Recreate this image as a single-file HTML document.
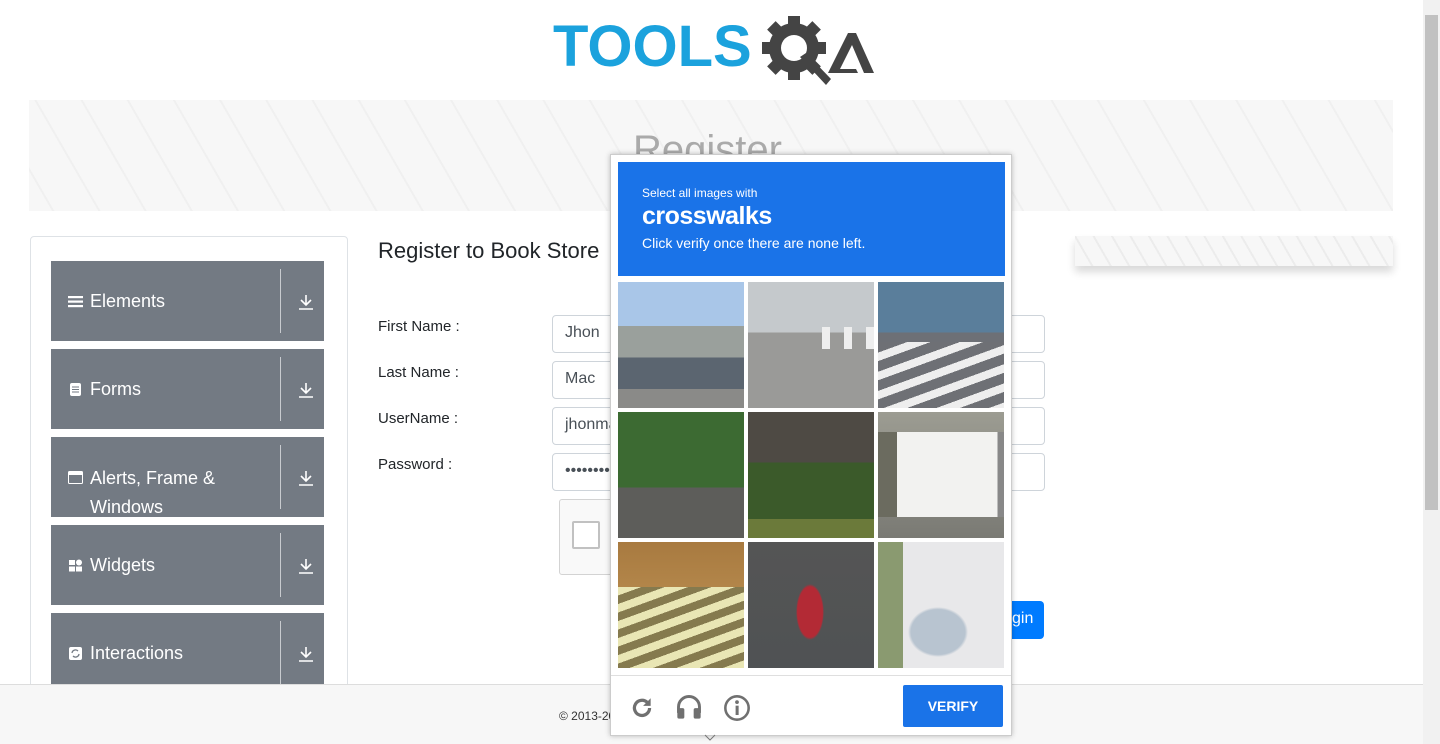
<!DOCTYPE html>
<html><head><meta charset="utf-8"><style>
*{box-sizing:border-box;margin:0;padding:0}
html,body{width:1440px;height:744px;overflow:hidden}
body{background:#fff;font-family:"Liberation Sans",sans-serif;position:relative;color:#212529}
.abs{position:absolute}
.banner{left:29px;top:100px;width:1364px;height:111px;background:
repeating-linear-gradient(60deg,#f7f7f7 0 20px,#efefef 20px 22px,#f7f7f7 22px 40px),#f5f5f5;opacity:.9}
.panel{left:30px;top:236px;width:318px;height:500px;border:1px solid #dee2e6;border-radius:4px}
.grp{left:51px;width:273px;height:80px;background:#737a83;color:#fff;font-size:18px}
.grp .t{position:absolute;left:39px;top:28px;line-height:24px}
.grp .ic{position:absolute;left:17px;top:34px;width:15px;height:13px}
.grp .sep{position:absolute;left:229px;top:8px;width:1px;height:64px;background:#c8cbcf}
.grp .dl{position:absolute;left:246px;top:32px;width:18px;height:18px}
.lbl{left:378px;font-size:15px;color:#212529}
.inp{left:552px;width:493px;height:38px;border:1px solid #ced4da;border-radius:4px;font-size:16px;color:#495057;padding:8px 12px}
.foot{left:0;top:684px;width:1423px;height:60px;background:#f7f7f7;border-top:1px solid #ddd;z-index:2}
.pop{left:610px;top:154px;width:402px;height:582px;background:#fff;border:1px solid #ccc;box-shadow:0 0 5px rgba(0,0,0,.25);z-index:5}
.hdr{left:7px;top:7px;width:387px;height:114px;background:#1a73e8;color:#fff;font-family:"Liberation Sans",sans-serif}
.img{width:126px;height:126px}
</style></head><body>
<!-- scrollbar -->
<div class="abs" style="left:1423px;top:0;width:17px;height:744px;background:#f1f1f1"></div>
<div class="abs" style="left:1425px;top:15px;width:13px;height:495px;background:#c1c1c1"></div>
<!-- logo -->
<div class="abs" style="left:553px;top:18px;font:900 58px/58px 'Liberation Sans',sans-serif;color:#1ba2dd">TOOLS</div>
<svg class="abs" style="left:760px;top:15px" width="115" height="75" viewBox="0 0 115 75">
<g fill="#444"><circle cx="34" cy="33" r="25"/>
<g transform="translate(34 33)"><rect x="-6" y="-32" width="12" height="64"/><rect x="-32" y="-6" width="64" height="12"/><rect x="-6" y="-32" width="12" height="64" transform="rotate(45)"/><rect x="-6" y="-32" width="12" height="64" transform="rotate(-45)"/></g>
</g>
<circle cx="34" cy="33" r="13" fill="#fff"/>
<path d="M40 42 L66 70 L71 64 L46 38Z" fill="#444"/>
<path d="M68 58 L88 18 L96 18 L114 58 L104 58 L92 30 L80 54 L96 54 L98 58Z" fill="#444"/>
</svg>
<div class="abs banner"></div>
<div class="abs" style="left:633px;top:128px;font-size:40px;color:#aaa;font-weight:300">Register</div>
<!-- sidebar -->
<div class="abs panel"></div>
<div class="abs grp" style="top:261px"><svg class="ic" viewBox="0 0 15 13"><rect y="1" width="15" height="2.2" fill="#fff"/><rect y="5.5" width="15" height="2.2" fill="#fff"/><rect y="10" width="15" height="2.2" fill="#fff"/></svg><span class="t">Elements</span><i class="sep"></i><svg class="dl" viewBox="0 0 18 18"><path d="M9 2v10M4 7l5 5 5-5M2 16h14" stroke="#fff" stroke-width="1.6" fill="none"/></svg></div>
<div class="abs grp" style="top:349px"><svg class="ic" viewBox="0 0 15 13"><rect x="2" y="0" width="11" height="13" rx="2" fill="#fff"/><path d="M4 4h7M4 6.5h7M4 9h7" stroke="#737a83"/></svg><span class="t">Forms</span><i class="sep"></i><svg class="dl" viewBox="0 0 18 18"><path d="M9 2v10M4 7l5 5 5-5M2 16h14" stroke="#fff" stroke-width="1.6" fill="none"/></svg></div>
<div class="abs grp" style="top:437px"><svg class="ic" viewBox="0 0 15 13"><rect x=".5" y=".5" width="14" height="12" rx="1" fill="none" stroke="#fff"/><rect x="1" y="1" width="13" height="3" fill="#fff"/></svg><span class="t" style="top:27px;line-height:29px">Alerts, Frame &amp;<br>Windows</span><i class="sep"></i><svg class="dl" viewBox="0 0 18 18"><path d="M9 2v10M4 7l5 5 5-5M2 16h14" stroke="#fff" stroke-width="1.6" fill="none"/></svg></div>
<div class="abs grp" style="top:525px"><svg class="ic" viewBox="0 0 15 13"><rect x="1" y="1" width="6" height="5" fill="#fff"/><circle cx="11" cy="3.5" r="3" fill="#fff"/><rect x="1" y="7.5" width="6" height="5" fill="#fff"/><rect x="8" y="7.5" width="6" height="5" fill="#fff"/></svg><span class="t">Widgets</span><i class="sep"></i><svg class="dl" viewBox="0 0 18 18"><path d="M9 2v10M4 7l5 5 5-5M2 16h14" stroke="#fff" stroke-width="1.6" fill="none"/></svg></div>
<div class="abs grp" style="top:613px"><svg class="ic" viewBox="0 0 15 13"><rect x="1" y="0" width="13" height="13" rx="2" fill="#fff"/><path d="M4 6a3.5 3.5 0 0 1 6-2M11 7a3.5 3.5 0 0 1-6 2" stroke="#737a83" fill="none" stroke-width="1.3"/></svg><span class="t">Interactions</span><i class="sep"></i><svg class="dl" viewBox="0 0 18 18"><path d="M9 2v10M4 7l5 5 5-5M2 16h14" stroke="#fff" stroke-width="1.6" fill="none"/></svg></div>
<!-- form -->
<div class="abs" style="left:378px;top:238px;font-size:22px;font-weight:500">Register to Book Store</div>
<div class="abs lbl" style="top:318px">First Name :</div>
<div class="abs lbl" style="top:364px">Last Name :</div>
<div class="abs lbl" style="top:410px">UserName :</div>
<div class="abs lbl" style="top:456px">Password :</div>
<div class="abs inp" style="top:315px">Jhon</div>
<div class="abs inp" style="top:361px">Mac</div>
<div class="abs inp" style="top:407px">jhonmac</div>
<div class="abs inp" style="top:453px">••••••••</div>
<div class="abs" style="left:559px;top:499px;width:300px;height:76px;background:#f9f9f9;border:1px solid #d3d3d3;border-radius:3px"></div>
<div class="abs" style="left:572px;top:521px;width:28px;height:28px;background:#fff;border:2px solid #c1c1c1;border-radius:2px"></div>
<div class="abs" style="left:990px;top:601px;width:54px;height:38px;background:#007bff;border-radius:4px;color:#fff;font-size:16px;padding:9px 0 0 22px">gin</div>
<div class="abs" style="left:1075px;top:236px;width:318px;height:30px;background:repeating-linear-gradient(60deg,#f7f7f7 0 14px,#ececec 14px 16px);box-shadow:0 6px 8px rgba(0,0,0,.15)"></div>
<!-- footer -->
<div class="abs foot"><div class="abs" style="left:559px;top:24px;font-size:12px;color:#333">© 2013-2020 TOOLSQA.COM | ALL RIGHTS RESERVED.</div></div>
<!-- captcha -->
<div class="abs pop">
<div class="abs hdr"><div class="abs" style="left:24px;top:24px;font-size:12px">Select all images with</div><div class="abs" style="left:24px;top:40px;font-size:25px;font-weight:bold;letter-spacing:-.5px">crosswalks</div><div class="abs" style="left:24px;top:73px;font-size:14px">Click verify once there are none left.</div></div>
<div class="abs img" style="left:7px;top:127px;background:linear-gradient(#a9c6e8 0 35%,#9aa09c 35% 60%,#5b6570 60% 85%,#8a8a88 85%)"></div>
<div class="abs img" style="left:137px;top:127px;background:repeating-linear-gradient(90deg,transparent 0 14px,#eee 14px 22px) 60px 45px/66px 22px no-repeat,linear-gradient(#c5c9cc 0 40%,#9a9a98 40%)"></div>
<div class="abs img" style="left:267px;top:127px;background:repeating-linear-gradient(160deg,#6e7075 0 10px,#eee 10px 18px) 0 60px/126px 66px no-repeat,linear-gradient(#5a7e9b 0 40%,#6d7076 40%)"></div>
<div class="abs img" style="left:7px;top:257px;background:linear-gradient(#3c6a32 0 60%,#5d5d5a 60%)"></div>
<div class="abs img" style="left:137px;top:257px;background:linear-gradient(#4e4a44 0 40%,#3b5a2a 40% 85%,#6b7a3a 85%)"></div>
<div class="abs img" style="left:267px;top:257px;background:linear-gradient(90deg,#6b6b5f 0 15%,#f2f2f0 15% 95%,#888 95%) 0 20px/126px 85px no-repeat,linear-gradient(#9c9c92,#7a7a74)"></div>
<div class="abs img" style="left:7px;top:387px;background:repeating-linear-gradient(160deg,#e9e6b4 0 8px,#857a4e 8px 16px) 0 45px/126px 81px no-repeat,linear-gradient(#a87a40,#c59a5a)"></div>
<div class="abs img" style="left:137px;top:387px;background:radial-gradient(ellipse 14px 28px at 62px 70px,#b32a35 90%,transparent),linear-gradient(#555,#4f5254)"></div>
<div class="abs img" style="left:267px;top:387px;background:radial-gradient(ellipse 30px 25px at 60px 90px,#b8c4d0 90%,transparent),linear-gradient(90deg,#8a9a70 0 20%,#e8e8ea 20%)"></div>
<div class="abs" style="left:0;top:520px;width:400px;height:1px;background:#dfdfdf"></div>
<svg class="abs" style="left:18px;top:540px" width="26" height="26" viewBox="0 0 24 24"><path d="M19 12a7 7 0 1 1-2-5" stroke="#707070" stroke-width="3" fill="none"/><path d="M20 3v7h-7z" fill="#707070"/></svg>
<svg class="abs" style="left:64px;top:538px" width="28" height="28" viewBox="0 0 24 24"><path d="M3 17v-5a9 9 0 0 1 18 0v5" stroke="#707070" stroke-width="2.5" fill="none"/><rect x="2" y="13" width="6" height="9" rx="1.5" fill="#707070"/><rect x="16" y="13" width="6" height="9" rx="1.5" fill="#707070"/></svg>
<svg class="abs" style="left:112px;top:539px" width="28" height="28" viewBox="0 0 24 24"><circle cx="12" cy="12" r="10" stroke="#707070" stroke-width="2.2" fill="none"/><rect x="10.8" y="10" width="2.6" height="8" fill="#707070"/><circle cx="12" cy="7" r="1.6" fill="#707070"/></svg>
<div class="abs" style="left:292px;top:530px;width:100px;height:42px;background:#1a73e8;border-radius:2px;color:#fff;font-weight:bold;font-size:14px;text-align:center;line-height:42px">VERIFY</div>
</div>
<svg class="abs" style="left:704px;top:734px;z-index:6" width="12" height="8"><path d="M1 1l5 5 5-5" stroke="#777" fill="none"/></svg>
</body></html>
